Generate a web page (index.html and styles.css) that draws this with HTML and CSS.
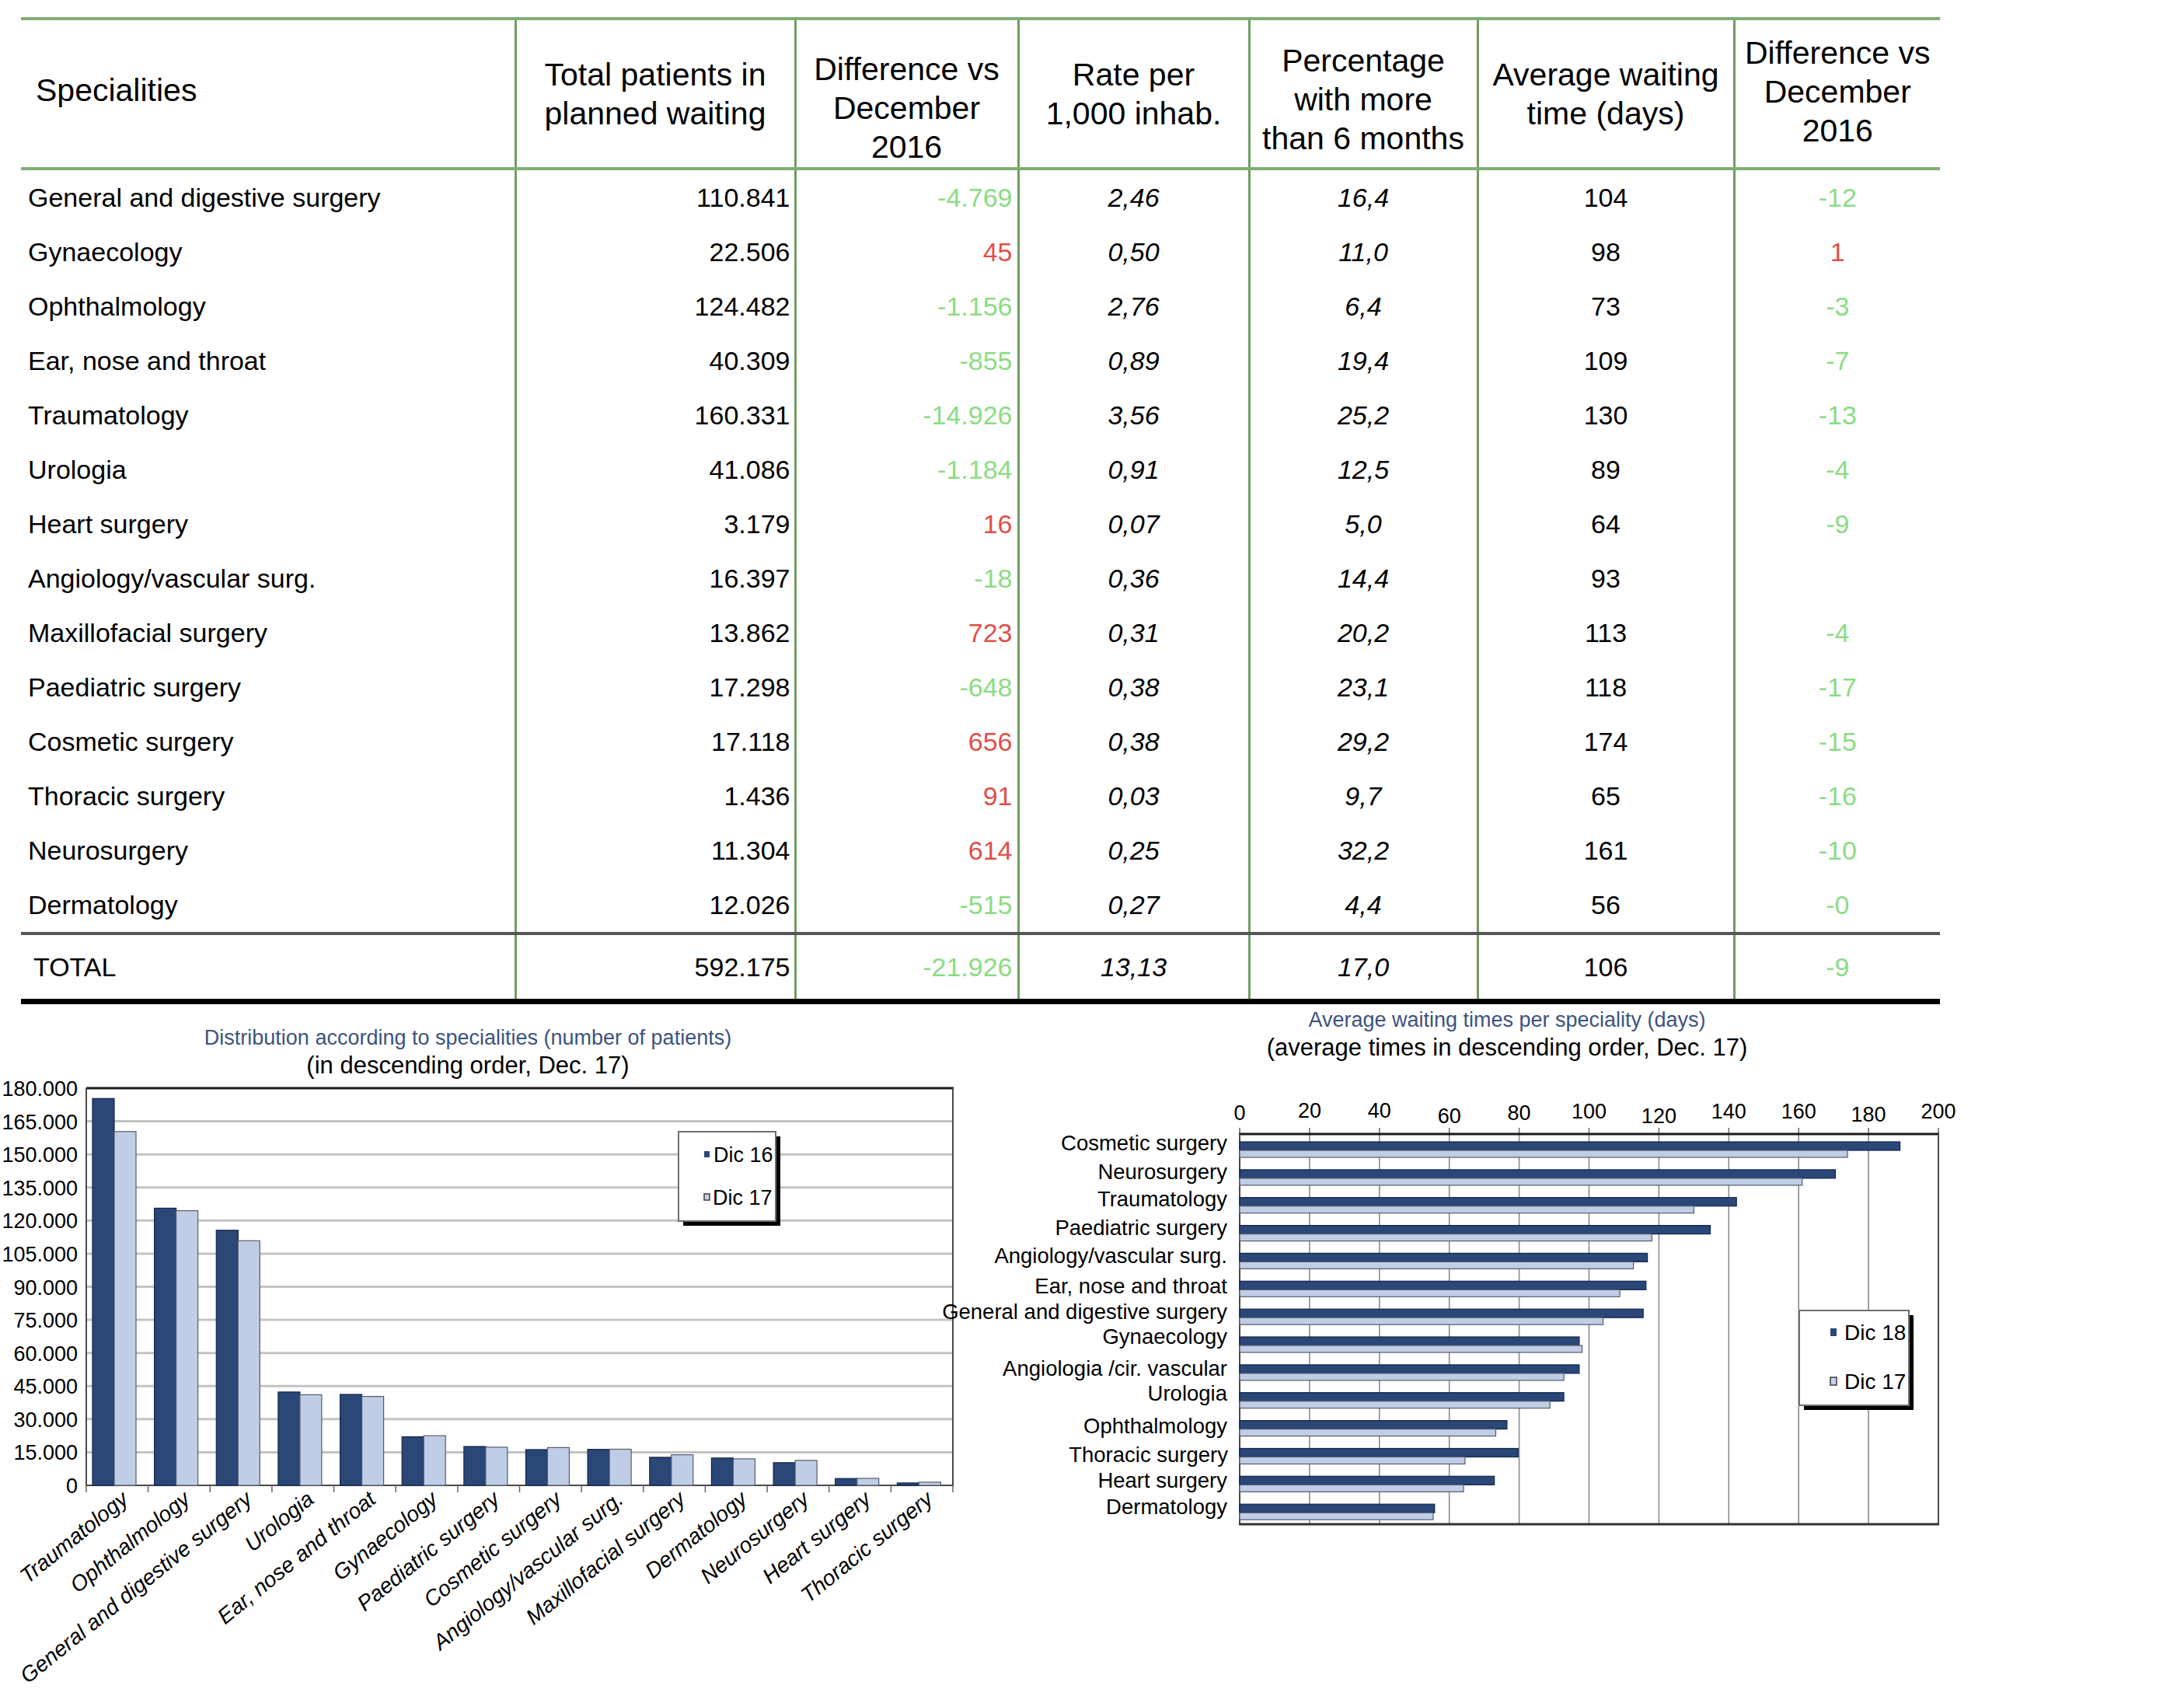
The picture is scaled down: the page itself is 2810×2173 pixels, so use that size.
FILE: index.html
```html
<!DOCTYPE html>
<html lang="en">
<head>
<meta charset="utf-8">
<title>Waiting lists by speciality</title>
<link rel="stylesheet" href="styles.css">
</head>
<body>
<div class="page">
  <table class="stats">
    <colgroup>
      <col class="c1"><col class="c2"><col class="c3"><col class="c4"><col class="c5"><col class="c6"><col class="c7">
    </colgroup>
    <thead>
      <tr>
        <th class="h-spec"><span class="hd">Specialities</span></th>
        <th><span class="hd">Total patients in<br>planned waiting</span></th>
        <th class="h-diff"><span class="hd">Difference vs<br>December<br>2016</span></th>
        <th><span class="hd">Rate per<br>1,000 inhab.</span></th>
        <th class="h-pct"><span class="hd">Percentage<br>with more<br>than 6 months</span></th>
        <th><span class="hd">Average waiting<br>time (days)</span></th>
        <th class="h-last"><span class="hd">Difference vs<br>December<br>2016</span></th>
      </tr>
    </thead>
    <tbody>
      <tr><td class="name">General and digestive surgery</td><td class="num">110.841</td><td class="diff pos">-4.769</td><td class="rate">2,46</td><td class="pct">16,4</td><td class="avg">104</td><td class="dd pos">-12</td></tr>
      <tr><td class="name">Gynaecology</td><td class="num">22.506</td><td class="diff neg">45</td><td class="rate">0,50</td><td class="pct">11,0</td><td class="avg">98</td><td class="dd neg">1</td></tr>
      <tr><td class="name">Ophthalmology</td><td class="num">124.482</td><td class="diff pos">-1.156</td><td class="rate">2,76</td><td class="pct">6,4</td><td class="avg">73</td><td class="dd pos">-3</td></tr>
      <tr><td class="name">Ear, nose and throat</td><td class="num">40.309</td><td class="diff pos">-855</td><td class="rate">0,89</td><td class="pct">19,4</td><td class="avg">109</td><td class="dd pos">-7</td></tr>
      <tr><td class="name">Traumatology</td><td class="num">160.331</td><td class="diff pos">-14.926</td><td class="rate">3,56</td><td class="pct">25,2</td><td class="avg">130</td><td class="dd pos">-13</td></tr>
      <tr><td class="name">Urologia</td><td class="num">41.086</td><td class="diff pos">-1.184</td><td class="rate">0,91</td><td class="pct">12,5</td><td class="avg">89</td><td class="dd pos">-4</td></tr>
      <tr><td class="name">Heart surgery</td><td class="num">3.179</td><td class="diff neg">16</td><td class="rate">0,07</td><td class="pct">5,0</td><td class="avg">64</td><td class="dd pos">-9</td></tr>
      <tr><td class="name">Angiology/vascular surg.</td><td class="num">16.397</td><td class="diff pos">-18</td><td class="rate">0,36</td><td class="pct">14,4</td><td class="avg">93</td><td class="dd pos"></td></tr>
      <tr><td class="name">Maxillofacial surgery</td><td class="num">13.862</td><td class="diff neg">723</td><td class="rate">0,31</td><td class="pct">20,2</td><td class="avg">113</td><td class="dd pos">-4</td></tr>
      <tr><td class="name">Paediatric surgery</td><td class="num">17.298</td><td class="diff pos">-648</td><td class="rate">0,38</td><td class="pct">23,1</td><td class="avg">118</td><td class="dd pos">-17</td></tr>
      <tr><td class="name">Cosmetic surgery</td><td class="num">17.118</td><td class="diff neg">656</td><td class="rate">0,38</td><td class="pct">29,2</td><td class="avg">174</td><td class="dd pos">-15</td></tr>
      <tr><td class="name">Thoracic surgery</td><td class="num">1.436</td><td class="diff neg">91</td><td class="rate">0,03</td><td class="pct">9,7</td><td class="avg">65</td><td class="dd pos">-16</td></tr>
      <tr><td class="name">Neurosurgery</td><td class="num">11.304</td><td class="diff neg">614</td><td class="rate">0,25</td><td class="pct">32,2</td><td class="avg">161</td><td class="dd pos">-10</td></tr>
      <tr><td class="name">Dermatology</td><td class="num">12.026</td><td class="diff pos">-515</td><td class="rate">0,27</td><td class="pct">4,4</td><td class="avg">56</td><td class="dd pos">-0</td></tr>
    </tbody>
    <tfoot>
      <tr><td class="name total-name">TOTAL</td><td class="num">592.175</td><td class="diff pos">-21.926</td><td class="rate">13,13</td><td class="pct">17,0</td><td class="avg">106</td><td class="dd pos">-9</td></tr>
    </tfoot>
  </table>

  <div class="charts">
    <figure class="chart chart-left">
      <div class="chart-title">Distribution according to specialities (number of patients)</div>
      <div class="chart-sub">(in descending order, Dec. 17)</div>
      <svg class="plot" width="1240" height="788" viewBox="0 0 1240 788">
        <g class="grid">
          <line x1="111" y1="479.4" x2="1226" y2="479.4"/>
          <line x1="111" y1="436.8" x2="1226" y2="436.8"/>
          <line x1="111" y1="394.3" x2="1226" y2="394.3"/>
          <line x1="111" y1="351.7" x2="1226" y2="351.7"/>
          <line x1="111" y1="309.1" x2="1226" y2="309.1"/>
          <line x1="111" y1="266.5" x2="1226" y2="266.5"/>
          <line x1="111" y1="223.9" x2="1226" y2="223.9"/>
          <line x1="111" y1="181.3" x2="1226" y2="181.3"/>
          <line x1="111" y1="138.8" x2="1226" y2="138.8"/>
          <line x1="111" y1="96.2" x2="1226" y2="96.2"/>
          <line x1="111" y1="53.6" x2="1226" y2="53.6"/>
        </g>
        <g class="frame">
          <line class="frame-top" x1="111" y1="11" x2="1227" y2="11"/>
          <line x1="1226" y1="11" x2="1226" y2="522"/>
          <line x1="111" y1="11" x2="111" y2="523"/>
          <line x1="110" y1="522" x2="1227" y2="522"/>
        </g>
        <g class="ticks">
          <line x1="111" y1="522" x2="111" y2="531"/><line x1="190.6" y1="522" x2="190.6" y2="531"/><line x1="270.3" y1="522" x2="270.3" y2="531"/><line x1="349.9" y1="522" x2="349.9" y2="531"/><line x1="429.6" y1="522" x2="429.6" y2="531"/><line x1="509.2" y1="522" x2="509.2" y2="531"/><line x1="588.9" y1="522" x2="588.9" y2="531"/><line x1="668.5" y1="522" x2="668.5" y2="531"/><line x1="748.1" y1="522" x2="748.1" y2="531"/><line x1="827.8" y1="522" x2="827.8" y2="531"/><line x1="907.4" y1="522" x2="907.4" y2="531"/><line x1="987.1" y1="522" x2="987.1" y2="531"/><line x1="1066.7" y1="522" x2="1066.7" y2="531"/><line x1="1146.4" y1="522" x2="1146.4" y2="531"/><line x1="1226" y1="522" x2="1226" y2="531"/>
        </g>
        <g class="ylab">
          <text x="100" y="21">180.000</text>
          <text x="100" y="63.6">165.000</text>
          <text x="100" y="106.2">150.000</text>
          <text x="100" y="148.8">135.000</text>
          <text x="100" y="191.3">120.000</text>
          <text x="100" y="233.9">105.000</text>
          <text x="100" y="276.5">90.000</text>
          <text x="100" y="319.1">75.000</text>
          <text x="100" y="361.7">60.000</text>
          <text x="100" y="404.3">45.000</text>
          <text x="100" y="446.8">30.000</text>
          <text x="100" y="489.4">15.000</text>
          <text x="100" y="532">0</text>
        </g>
        <g class="bar-dark">
          <rect x="119" y="24.3" width="28" height="497.7"/>
          <rect x="198.6" y="165.4" width="28" height="356.6"/>
          <rect x="278.3" y="193.8" width="28" height="328.2"/>
          <rect x="357.9" y="401.9" width="28" height="120.1"/>
          <rect x="437.6" y="405" width="28" height="117"/>
          <rect x="517.2" y="459.5" width="28" height="62.5"/>
          <rect x="596.9" y="472" width="28" height="50"/>
          <rect x="676.5" y="476" width="28" height="46"/>
          <rect x="756.1" y="475.7" width="28" height="46.3"/>
          <rect x="835.8" y="485.9" width="28" height="36.1"/>
          <rect x="915.4" y="486.8" width="28" height="35.2"/>
          <rect x="995.1" y="492.8" width="28" height="29.2"/>
          <rect x="1074.7" y="513.2" width="28" height="8.8"/>
          <rect x="1154.4" y="518.9" width="28" height="3.1"/>
        </g>
        <g class="bar-light">
          <rect x="147" y="66.8" width="28" height="455.2"/>
          <rect x="226.6" y="168.6" width="28" height="353.4"/>
          <rect x="306.3" y="207.3" width="28" height="314.7"/>
          <rect x="385.9" y="405.4" width="28" height="116.6"/>
          <rect x="465.6" y="407.6" width="28" height="114.4"/>
          <rect x="545.2" y="458.1" width="28" height="63.9"/>
          <rect x="624.9" y="472.9" width="28" height="49.1"/>
          <rect x="704.5" y="473.4" width="28" height="48.6"/>
          <rect x="784.1" y="475.5" width="28" height="46.5"/>
          <rect x="863.8" y="482.6" width="28" height="39.4"/>
          <rect x="943.4" y="487.9" width="28" height="34.1"/>
          <rect x="1023.1" y="489.9" width="28" height="32.1"/>
          <rect x="1102.7" y="513" width="28" height="9"/>
          <rect x="1182.4" y="517.9" width="28" height="4.1"/>
        </g>
        <g class="xlab">
          <text transform="translate(166.8 543) rotate(-39)">Traumatology</text>
          <text transform="translate(246.4 543) rotate(-39)">Ophthalmology</text>
          <text transform="translate(326.1 543) rotate(-39)">General and digestive surgery</text>
          <text transform="translate(405.7 543) rotate(-39)">Urologia</text>
          <text transform="translate(485.4 543) rotate(-39)">Ear, nose and throat</text>
          <text transform="translate(565 543) rotate(-39)">Gynaecology</text>
          <text transform="translate(644.7 543) rotate(-39)">Paediatric surgery</text>
          <text transform="translate(724.3 543) rotate(-39)">Cosmetic surgery</text>
          <text transform="translate(803.9 543) rotate(-39)">Angiology/vascular surg.</text>
          <text transform="translate(883.6 543) rotate(-39)">Maxillofacial surgery</text>
          <text transform="translate(963.2 543) rotate(-39)">Dermatology</text>
          <text transform="translate(1042.9 543) rotate(-39)">Neurosurgery</text>
          <text transform="translate(1122.5 543) rotate(-39)">Heart surgery</text>
          <text transform="translate(1202.2 543) rotate(-39)">Thoracic surgery</text>
        </g>
        <g class="legend">
          <rect class="legend-shadow" x="879" y="73" width="125" height="115"/>
          <rect class="legend-box" x="873" y="67" width="125" height="115"/>
          <rect class="mark-dark" x="906" y="92" width="7" height="8"/>
          <text class="legend-text" x="918" y="106">Dic 16</text>
          <rect class="mark-light" x="906" y="147" width="7" height="8"/>
          <text class="legend-text" x="917" y="161">Dic 17</text>
        </g>
      </svg>
    </figure>

    <figure class="chart chart-right">
      <div class="chart-title">Average waiting times per speciality (days)</div>
      <div class="chart-sub">(average times in descending order, Dec. 17)</div>
      <svg class="plot" width="1570" height="811" viewBox="0 0 1570 811">
        <g class="vgrid">
          <line x1="444.9" y1="93" x2="444.9" y2="595"/>
          <line x1="534.8" y1="93" x2="534.8" y2="595"/>
          <line x1="624.7" y1="93" x2="624.7" y2="595"/>
          <line x1="714.6" y1="93" x2="714.6" y2="595"/>
          <line x1="804.5" y1="93" x2="804.5" y2="595"/>
          <line x1="894.4" y1="93" x2="894.4" y2="595"/>
          <line x1="984.3" y1="93" x2="984.3" y2="595"/>
          <line x1="1074.2" y1="93" x2="1074.2" y2="595"/>
          <line x1="1164.1" y1="93" x2="1164.1" y2="595"/>
        </g>
        <g class="ticks">
          <line x1="355" y1="85" x2="355" y2="93"/><line x1="444.9" y1="85" x2="444.9" y2="93"/><line x1="534.8" y1="85" x2="534.8" y2="93"/><line x1="624.7" y1="85" x2="624.7" y2="93"/><line x1="714.6" y1="85" x2="714.6" y2="93"/><line x1="804.5" y1="85" x2="804.5" y2="93"/><line x1="894.4" y1="85" x2="894.4" y2="93"/><line x1="984.3" y1="85" x2="984.3" y2="93"/><line x1="1074.2" y1="85" x2="1074.2" y2="93"/><line x1="1164.1" y1="85" x2="1164.1" y2="93"/><line x1="1254" y1="85" x2="1254" y2="93"/>
        </g>
        <g class="frame">
          <line class="frame-top" x1="354" y1="93" x2="1255" y2="93"/>
          <line x1="1254" y1="93" x2="1254" y2="596"/>
          <line x1="355" y1="93" x2="355" y2="596"/>
          <line class="frame-bottom" x1="354" y1="595" x2="1255" y2="595"/>
        </g>
        <g class="tlab">
          <text x="355" y="75">0</text>
          <text x="444.9" y="72">20</text>
          <text x="534.8" y="72">40</text>
          <text x="624.7" y="79">60</text>
          <text x="714.6" y="75">80</text>
          <text x="804.5" y="73">100</text>
          <text x="894.4" y="79">120</text>
          <text x="984.3" y="73">140</text>
          <text x="1074.2" y="73">160</text>
          <text x="1164.1" y="77">180</text>
          <text x="1254" y="73">200</text>
        </g>
        <g class="bar-dark">
          <rect x="355" y="103" width="849.6" height="11"/>
          <rect x="355" y="138.9" width="766.4" height="11"/>
          <rect x="355" y="174.7" width="639.2" height="11"/>
          <rect x="355" y="210.6" width="605.5" height="11"/>
          <rect x="355" y="246.4" width="524.6" height="11"/>
          <rect x="355" y="282.3" width="522.8" height="11"/>
          <rect x="355" y="318.2" width="519.2" height="11"/>
          <rect x="355" y="354" width="436.9" height="11"/>
          <rect x="355" y="389.9" width="436.9" height="11"/>
          <rect x="355" y="425.7" width="417.1" height="11"/>
          <rect x="355" y="461.6" width="343.9" height="11"/>
          <rect x="355" y="497.5" width="358.3" height="11"/>
          <rect x="355" y="533.3" width="327.7" height="11"/>
          <rect x="355" y="569.2" width="250.8" height="11"/>
        </g>
        <g class="bar-light">
          <rect x="355" y="114" width="782.1" height="9"/>
          <rect x="355" y="149.9" width="723.7" height="9"/>
          <rect x="355" y="185.7" width="584.4" height="9"/>
          <rect x="355" y="221.6" width="530.4" height="9"/>
          <rect x="355" y="257.4" width="506.6" height="9"/>
          <rect x="355" y="293.3" width="489.1" height="9"/>
          <rect x="355" y="329.2" width="467.5" height="9"/>
          <rect x="355" y="365" width="440.5" height="9"/>
          <rect x="355" y="400.9" width="417.1" height="9"/>
          <rect x="355" y="436.7" width="399.2" height="9"/>
          <rect x="355" y="472.6" width="329.5" height="9"/>
          <rect x="355" y="508.5" width="289.9" height="9"/>
          <rect x="355" y="544.3" width="288.1" height="9"/>
          <rect x="355" y="580.2" width="249" height="9"/>
        </g>
        <g class="clab">
          <text x="339" y="114">Cosmetic surgery</text>
          <text x="339" y="151">Neurosurgery</text>
          <text x="339" y="186">Traumatology</text>
          <text x="339" y="223">Paediatric surgery</text>
          <text x="339" y="259">Angiology/vascular surg.</text>
          <text x="339" y="298">Ear, nose and throat</text>
          <text x="339" y="331">General and digestive surgery</text>
          <text x="339" y="363">Gynaecology</text>
          <text x="339" y="404">Angiologia /cir. vascular</text>
          <text x="339" y="436">Urologia</text>
          <text x="339" y="478">Ophthalmology</text>
          <text x="340" y="515">Thoracic surgery</text>
          <text x="339" y="548">Heart surgery</text>
          <text x="339" y="582">Dermatology</text>
        </g>
        <g class="legend">
          <rect class="legend-shadow" x="1081" y="326" width="141" height="122"/>
          <rect class="legend-box" x="1075" y="320" width="141" height="122"/>
          <rect class="mark-dark" x="1115" y="343" width="8" height="10"/>
          <text class="legend-text lt-right" x="1133" y="358">Dic 18</text>
          <rect class="mark-light" x="1115" y="406" width="8" height="10"/>
          <text class="legend-text lt-right" x="1133" y="421">Dic 17</text>
        </g>
      </svg>
    </figure>
  </div>
</div>
</body>
</html>
```
FILE: styles.css
```css
html, body {
  margin: 0;
  padding: 0;
  background: #ffffff;
  overflow: hidden;
}

.page {
  width: 2810px;
  height: 2173px;
  font-family: "Liberation Sans", Arial, Helvetica, sans-serif;
  color: #000;
}

/* ---------- Table ---------- */
.stats {
  border-collapse: collapse;
  table-layout: fixed;
  width: 2469px;
  margin: 22px 0 0 27px;
  font-family: "Liberation Sans", Arial, sans-serif;
}

.c1 { width: 636px; }
.c2 { width: 360px; }
.c3 { width: 287px; }
.c4 { width: 297px; }
.c5 { width: 294px; }
.c6 { width: 330px; }
.c7 { width: 265px; }

.stats thead tr {
  border-top: 4px solid #7fae72;
  border-bottom: 4px solid #7fae72;
}

.stats th,
.stats td {
  border-left: 3px solid #6f9c62;
  padding: 0;
}

.stats th:first-child,
.stats td:first-child {
  border-left: none;
}

.stats th {
  height: 189px;
  font-size: 41px;
  font-weight: normal;
  line-height: 50px;
  text-align: center;
  vertical-align: middle;
  white-space: nowrap;
}

.hd {
  display: inline-block;
}

.stats th.h-spec {
  text-align: left;
  padding-left: 19px;
}

.h-spec .hd { margin-bottom: 10px; }
.h-diff .hd { margin-top: 36px; }
.h-pct .hd { margin-top: 14px; }
.h-last .hd { margin-bottom: 6px; }

.stats td {
  height: 70px;
  font-size: 34px;
  line-height: 40px;
  vertical-align: middle;
  white-space: nowrap;
}

.stats tfoot tr {
  border-top: 4px solid #555555;
  border-bottom: 7px solid #000000;
}

.stats tfoot td {
  height: 82px;
}

.name { text-align: left; padding-left: 9px !important; }
.total-name { padding-left: 16px !important; }
.num { text-align: right; padding-right: 5px !important; }
.diff { text-align: right; padding-right: 6px !important; }
.rate { text-align: center; font-style: italic; }
.pct { text-align: center; font-style: italic; }
.avg { text-align: center; }
.dd { text-align: center; }

.pos { color: #8bdc83; }
.neg { color: #df5049; }

/* ---------- Charts ---------- */
.charts {
  display: flex;
  align-items: flex-start;
}

.chart {
  margin: 0;
  padding: 0;
}

.chart-left { width: 1240px; flex: 0 0 1240px; }
.chart-right { width: 1570px; flex: 0 0 1570px; }

.chart-title {
  font-size: 27px;
  line-height: 36px;
  color: #3c5380;
  text-align: center;
  white-space: nowrap;
}

.chart-sub {
  font-size: 31px;
  line-height: 36px;
  color: #000;
  text-align: center;
  white-space: nowrap;
}

.chart-left .chart-title { width: 1204px; margin-top: 25px; }
.chart-left .chart-sub { width: 1204px; }
.chart-right .chart-title { width: 1398px; margin-top: 2px; }
.chart-right .chart-sub { width: 1398px; }

.plot {
  display: block;
  overflow: visible;
  font-family: "Liberation Sans", Arial, sans-serif;
}

.grid line {
  stroke: #c3c3c3;
  stroke-width: 3;
}

.vgrid line {
  stroke: #8c8c8c;
  stroke-width: 1.6;
}

.frame line {
  stroke: #4a4a4a;
  stroke-width: 2;
}

.frame .frame-top {
  stroke: #1a1a1a;
  stroke-width: 3;
}

.frame .frame-bottom {
  stroke: #333333;
  stroke-width: 3;
}

.ticks line {
  stroke: #666666;
  stroke-width: 1.5;
}

.ylab text {
  font-size: 27px;
  text-anchor: end;
  fill: #000;
}

.tlab text {
  font-size: 27px;
  text-anchor: middle;
  fill: #000;
}

.xlab text {
  font-size: 28px;
  font-style: italic;
  text-anchor: end;
  fill: #000;
}

.clab text {
  font-size: 27.5px;
  text-anchor: end;
  fill: #000;
}

.bar-dark rect {
  fill: #2a4778;
  stroke: #13254a;
  stroke-width: 1.2;
}

.bar-light rect {
  fill: #bfcde6;
  stroke: #555d6b;
  stroke-width: 1.2;
}

.legend-shadow {
  fill: #000;
}

.legend-box {
  fill: #fff;
  stroke: #6e6e6e;
  stroke-width: 2;
}

.mark-dark {
  fill: #2a4778;
}

.mark-light {
  fill: #c5d2ea;
  stroke: #3e3e3e;
  stroke-width: 1.5;
}

.legend-text {
  font-size: 27px;
  fill: #000;
}

.legend-text.lt-right {
  font-size: 28px;
}
```
